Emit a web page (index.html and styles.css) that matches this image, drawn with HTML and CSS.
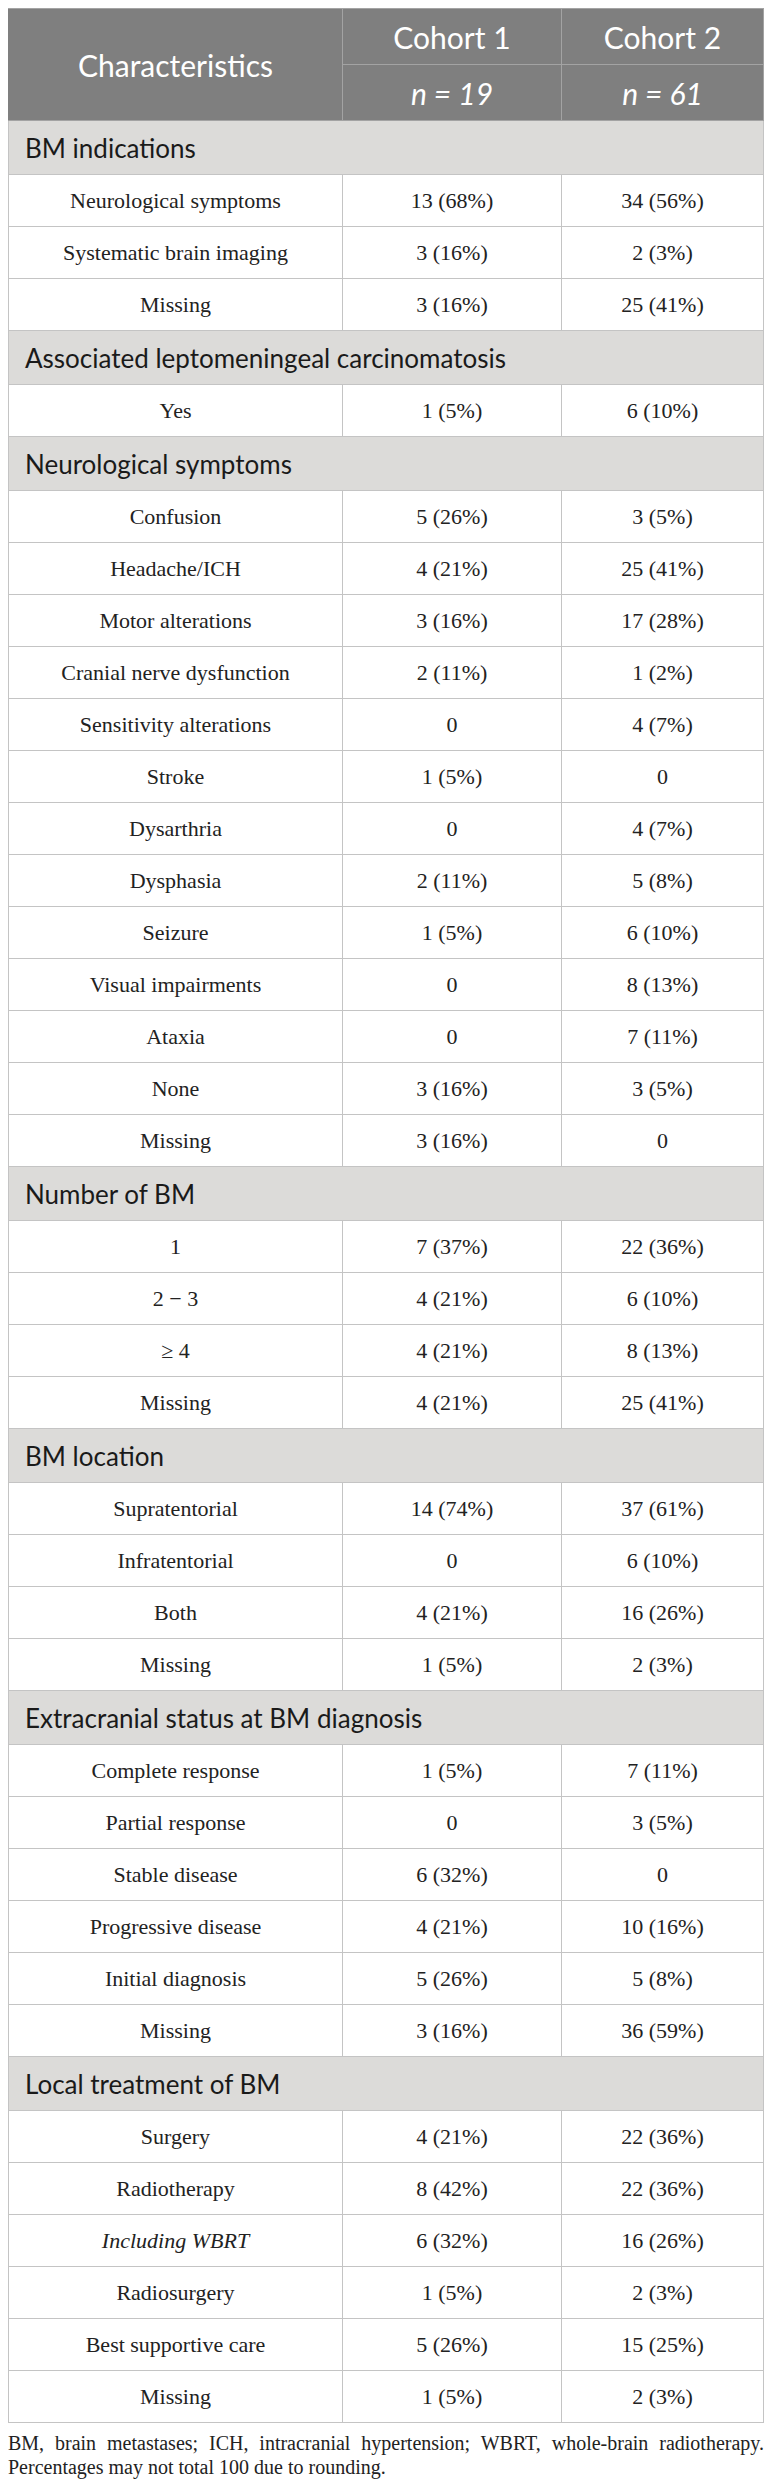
FILE: index.html
```html
<!DOCTYPE html>
<html lang="en">
<head>
  <meta charset="UTF-8">
  <meta name="viewport" content="width=device-width, initial-scale=1.0">
  <title>Brain metastases characteristics</title>
  <link rel="stylesheet" href="styles.css">
</head>
<body>
  <table class="data-table">
    <colgroup>
      <col class="col-label">
      <col class="col-cohort1">
      <col class="col-cohort2">
    </colgroup>
    <thead>
      <tr>
        <th rowspan="2" class="head-main">Characteristics</th>
        <th>Cohort 1</th>
        <th>Cohort 2</th>
      </tr>
      <tr>
        <th class="head-n">n = 19</th>
        <th class="head-n">n = 61</th>
      </tr>
    </thead>
    <tbody>
      <tr class="section"><td colspan="3">BM indications</td></tr>
      <tr><td>Neurological symptoms</td><td>13 (68%)</td><td>34 (56%)</td></tr>
      <tr><td>Systematic brain imaging</td><td>3 (16%)</td><td>2 (3%)</td></tr>
      <tr><td>Missing</td><td>3 (16%)</td><td>25 (41%)</td></tr>

      <tr class="section"><td colspan="3">Associated leptomeningeal carcinomatosis</td></tr>
      <tr><td>Yes</td><td>1 (5%)</td><td>6 (10%)</td></tr>

      <tr class="section"><td colspan="3">Neurological symptoms</td></tr>
      <tr><td>Confusion</td><td>5 (26%)</td><td>3 (5%)</td></tr>
      <tr><td>Headache/ICH</td><td>4 (21%)</td><td>25 (41%)</td></tr>
      <tr><td>Motor alterations</td><td>3 (16%)</td><td>17 (28%)</td></tr>
      <tr><td>Cranial nerve dysfunction</td><td>2 (11%)</td><td>1 (2%)</td></tr>
      <tr><td>Sensitivity alterations</td><td>0</td><td>4 (7%)</td></tr>
      <tr><td>Stroke</td><td>1 (5%)</td><td>0</td></tr>
      <tr><td>Dysarthria</td><td>0</td><td>4 (7%)</td></tr>
      <tr><td>Dysphasia</td><td>2 (11%)</td><td>5 (8%)</td></tr>
      <tr><td>Seizure</td><td>1 (5%)</td><td>6 (10%)</td></tr>
      <tr><td>Visual impairments</td><td>0</td><td>8 (13%)</td></tr>
      <tr><td>Ataxia</td><td>0</td><td>7 (11%)</td></tr>
      <tr><td>None</td><td>3 (16%)</td><td>3 (5%)</td></tr>
      <tr><td>Missing</td><td>3 (16%)</td><td>0</td></tr>

      <tr class="section"><td colspan="3">Number of BM</td></tr>
      <tr><td>1</td><td>7 (37%)</td><td>22 (36%)</td></tr>
      <tr><td>2 &minus; 3</td><td>4 (21%)</td><td>6 (10%)</td></tr>
      <tr><td>&ge; 4</td><td>4 (21%)</td><td>8 (13%)</td></tr>
      <tr><td>Missing</td><td>4 (21%)</td><td>25 (41%)</td></tr>

      <tr class="section"><td colspan="3">BM location</td></tr>
      <tr><td>Supratentorial</td><td>14 (74%)</td><td>37 (61%)</td></tr>
      <tr><td>Infratentorial</td><td>0</td><td>6 (10%)</td></tr>
      <tr><td>Both</td><td>4 (21%)</td><td>16 (26%)</td></tr>
      <tr><td>Missing</td><td>1 (5%)</td><td>2 (3%)</td></tr>

      <tr class="section"><td colspan="3">Extracranial status at BM diagnosis</td></tr>
      <tr><td>Complete response</td><td>1 (5%)</td><td>7 (11%)</td></tr>
      <tr><td>Partial response</td><td>0</td><td>3 (5%)</td></tr>
      <tr><td>Stable disease</td><td>6 (32%)</td><td>0</td></tr>
      <tr><td>Progressive disease</td><td>4 (21%)</td><td>10 (16%)</td></tr>
      <tr><td>Initial diagnosis</td><td>5 (26%)</td><td>5 (8%)</td></tr>
      <tr><td>Missing</td><td>3 (16%)</td><td>36 (59%)</td></tr>

      <tr class="section"><td colspan="3">Local treatment of BM</td></tr>
      <tr><td>Surgery</td><td>4 (21%)</td><td>22 (36%)</td></tr>
      <tr><td>Radiotherapy</td><td>8 (42%)</td><td>22 (36%)</td></tr>
      <tr><td><i>Including WBRT</i></td><td>6 (32%)</td><td>16 (26%)</td></tr>
      <tr><td>Radiosurgery</td><td>1 (5%)</td><td>2 (3%)</td></tr>
      <tr><td>Best supportive care</td><td>5 (26%)</td><td>15 (25%)</td></tr>
      <tr><td>Missing</td><td>1 (5%)</td><td>2 (3%)</td></tr>
    </tbody>
  </table>

  <p class="footnote">BM, brain metastases; ICH, intracranial hypertension; WBRT, whole-brain radiotherapy. Percentages may not total 100 due to rounding.</p>
</body>
</html>
```

FILE: styles.css
```css
body {
  margin: 8px 8px 0;
  background-color: #fff;
  color: #222;
}

.data-table {
  width: 100%;
  border-collapse: collapse;
  table-layout: fixed;
  border: 1px solid #c4c4c4;
}

.col-label {
  width: 334px;
}

.col-cohort1 {
  width: 219px;
}

.data-table th {
  height: 55px;
  padding: 0;
  background-color: #7f7f7f;
  color: #fff;
  font-family: Lato, "Noto Sans", sans-serif;
  font-size: 30px;
  font-weight: 400;
  border: 1px solid #a3a3a3;
  text-align: center;
}

.data-table th.head-main {
  border-left-color: #7f7f7f;
}

.head-n {
  font-style: italic;
}

.data-table td {
  height: 51px;
  padding: 0 8px;
  border: 1px solid #c4c4c4;
  text-align: center;
  font-family: "Liberation Serif", serif;
  font-size: 22px;
  color: #222;
}

.data-table .section td {
  height: 53px;
  padding: 0 16px;
  background-color: #dcdbd9;
  text-align: left;
  font-family: Lato, "Noto Sans", sans-serif;
  font-size: 26px;
  font-weight: 400;
  color: #1a1a1a;
}

.footnote {
  margin: 8px 0 0;
  font-family: "Liberation Serif", serif;
  font-size: 20px;
  line-height: 24px;
  text-align: justify;
  color: #222;
}
```
